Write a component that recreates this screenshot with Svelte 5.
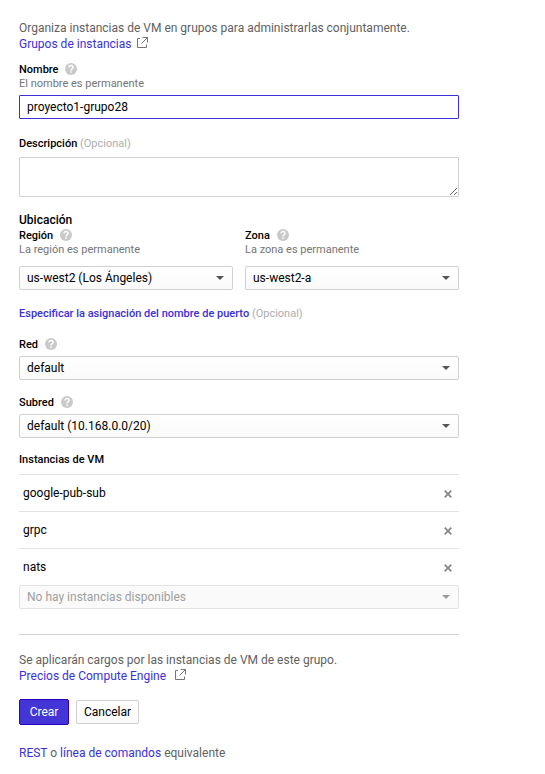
<script>
  const name = 'proyecto1-grupo28';
  const instances = ['google-pub-sub', 'grpc', 'nats'];
</script>

{#snippet help()}
  <svg class="help" width="12" height="12" viewBox="0 0 12 12">
    <circle cx="6" cy="6" r="6" fill="#c9c9c9" />
    <path d="M4 4.600C4 3.200 4.900 2.500 6 2.500s2 .8 2 1.900C8 5.700 6 5.800 6 7.400" fill="none" stroke="#fff" stroke-width="1.500" />
    <rect x="5.250" y="8.300" width="1.500" height="1.500" fill="#fff" />
  </svg>
{/snippet}

{#snippet external()}
  <svg class="external" width="12" height="12" viewBox="0 0 12 12" fill="none" stroke="#757575">
    <path d="M3 1.500H.5v9h9V7.500M5.500 .5h5v5M10.500 .5L4.500 6.500" />
  </svg>
{/snippet}

{#snippet select(text, disabled = false)}
  <div class="select" class:disabled role="button" tabindex="-1">
    <span>{text}</span>
    <svg width="8" height="4" viewBox="0 0 8 4"><path d="M0 0h8L4 4z" fill="currentColor" /></svg>
  </div>
{/snippet}

<main>
  <p>Organiza instancias de VM en grupos para administrarlas conjuntamente.</p>
  <p class="link-line"><a href="#grupos">Grupos de instancias</a>{@render external()}</p>

  <div class="label name">Nombre{@render help()}</div>
  <div class="note">El nombre es permanente</div>
  <input value={name} spellcheck="false" aria-label="Nombre" />

  <div class="label description">Descripción&nbsp;<span class="optional">(Opcional)</span></div>
  <textarea aria-label="Descripción"></textarea>

  <h2>Ubicación</h2>
  <div class="columns">
    <div>
      <div class="label">Región{@render help()}</div>
      <div class="note">La región es permanente</div>
      {@render select('us-west2 (Los Ángeles)')}
    </div>
    <div>
      <div class="label">Zona{@render help()}</div>
      <div class="note">La zona es permanente</div>
      {@render select('us-west2-a')}
    </div>
  </div>

  <div class="label port"><a href="#puerto">Especificar la asignación del nombre de puerto</a>&nbsp;<span class="optional">(Opcional)</span></div>

  <div class="label network">Red{@render help()}</div>
  {@render select('default')}
  <div class="label subnet">Subred{@render help()}</div>
  {@render select('default (10.168.0.0/20)')}

  <div class="label vms">Instancias de VM</div>
  <ul>
    {#each instances as instance}
      <li>
        <span>{instance}</span>
        <svg width="8" height="8" viewBox="0 0 8 8"><path d="M.7 .7l6.600 6.600M7.300 .7L.7 7.300" stroke="#858585" stroke-width="1.700" /></svg>
      </li>
    {/each}
  </ul>
  {@render select('No hay instancias disponibles', true)}

  <hr />

  <p>Se aplicarán cargos por las instancias de VM de este grupo.</p>
  <p class="link-line pricing"><a href="#precios">Precios de Compute Engine</a>{@render external()}</p>

  <div class="actions">
    <button class="primary">Crear</button>
    <button>Cancelar</button>
  </div>

  <p><a href="#rest">REST</a> o <a href="#cli">línea de comandos</a> equivalente</p>
</main>

<style>
  :global(body) {
    margin: 0;
    background: #fff;
  }
  main {
    box-sizing: border-box;
    width: 459px;
    padding: 20px 0 0 19px;
    font: 12px/16px Roboto, sans-serif;
    color: #616161;
  }
  p {
    margin: 0;
  }
  a {
    color: #3b30d6;
    text-decoration: none;
  }
  .link-line {
    display: flex;
  }
  .external {
    margin: 1px 0 0 6px;
  }
  .pricing .external {
    margin-left: 9px;
  }
  .label {
    display: flex;
    align-items: center;
    height: 14px;
    padding-top: 1px;
    font-size: 11px;
    line-height: 14px;
    font-weight: 500;
    color: #000;
  }
  .help {
    margin: -2px 0 0 6px;
  }
  .note {
    font-size: 11px;
    line-height: 14px;
    color: #757575;
  }
  .optional {
    font-weight: 400;
    color: #adadad;
  }
  .name {
    margin-top: 10px;
  }
  input,
  textarea {
    display: block;
    box-sizing: border-box;
    width: 440px;
    margin: 0;
    padding: 0 7px;
    border: 1px solid #d0d0d0;
    border-radius: 1px;
    outline: none;
    background: #fff;
    font: 12px/16px Roboto, sans-serif;
    color: #000;
  }
  input {
    height: 24px;
    margin-top: 4px;
    border-color: #3b30d6;
  }
  .description {
    margin-top: 17px;
  }
  textarea {
    height: 40px;
    margin-top: 6px;
  }
  h2 {
    margin: 15px 0 0;
    font-size: 12px;
    line-height: 16px;
    font-weight: 500;
    color: #000;
  }
  .columns {
    display: grid;
    grid-template-columns: 1fr 1fr;
    gap: 12px;
  }
  .columns .help {
    margin-left: 7px;
  }
  .select {
    display: flex;
    align-items: center;
    justify-content: space-between;
    box-sizing: border-box;
    height: 24px;
    padding: 0 8px 0 7px;
    border: 1px solid #d0d0d0;
    border-radius: 2px;
    background: linear-gradient(#fff, #fafafa);
    color: #000;
  }
  .select svg {
    color: #555;
  }
  .note + .select {
    margin-top: 9px;
  }
  .disabled {
    border-color: #e2e2e2;
    background: #fafafa;
    color: #9e9e9e;
  }
  .disabled svg {
    color: #999;
  }
  .port {
    margin-top: 16px;
  }
  .network {
    margin: 16px 0 5px;
  }
  .subnet {
    margin: 15px 0 4px;
  }
  .network {
    margin-bottom: 4px;
  }
  .network .help,
  .subnet .help {
    margin-left: 7px;
  }
  .vms {
    margin-top: 14px;
  }
  ul {
    margin: 7px 0 0;
    padding: 0;
    list-style: none;
  }
  li {
    display: flex;
    align-items: center;
    justify-content: space-between;
    box-sizing: border-box;
    height: 37px;
    padding: 0 7px 0 4px;
    border-top: 1px solid #e2e2e2;
    color: #000;
  }
  li svg {
    margin-top: 2px;
  }
  hr {
    height: 1px;
    margin: 25px 0 17px;
    border: 0;
    background: #d0d0d0;
  }
  .actions {
    display: flex;
    align-items: center;
    gap: 7px;
    margin: 15px 0 20px;
  }
  button {
    box-sizing: border-box;
    width: 63px;
    height: 24px;
    padding: 0;
    border: 1px solid #d0d0d0;
    border-radius: 2px;
    background: linear-gradient(#fff, #fafafa);
    font: 12px/16px Roboto, sans-serif;
    color: #000;
  }
  .primary {
    width: 50px;
    height: 26px;
    border-color: #2a00c0;
    background: #4335d6;
    color: #fff;
  }
</style>
